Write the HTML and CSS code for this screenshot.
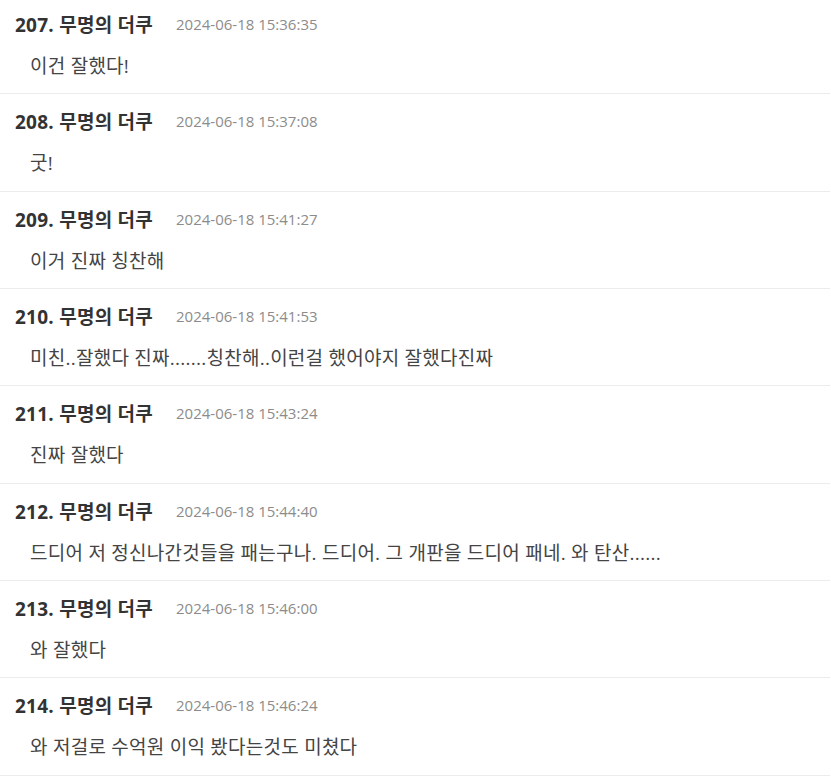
FILE: index.html
```html
<!DOCTYPE html>
<html lang="ko">
<head>
    <meta charset="UTF-8">
    <meta name="viewport" content="width=device-width, initial-scale=1.0">
    <title>댓글</title>
    <link rel="stylesheet" href="styles.css">
</head>
<body>
    <ul class="comment-list">
        <li class="comment">
            <div class="comment-head"><span class="comment-author">207. 무명의 더쿠</span><span class="comment-date">2024-06-18 15:36:35</span></div>
            <div class="comment-body">이건 잘했다!</div>
        </li>
        <li class="comment">
            <div class="comment-head"><span class="comment-author">208. 무명의 더쿠</span><span class="comment-date">2024-06-18 15:37:08</span></div>
            <div class="comment-body">굿!</div>
        </li>
        <li class="comment">
            <div class="comment-head"><span class="comment-author">209. 무명의 더쿠</span><span class="comment-date">2024-06-18 15:41:27</span></div>
            <div class="comment-body">이거 진짜 칭찬해</div>
        </li>
        <li class="comment">
            <div class="comment-head"><span class="comment-author">210. 무명의 더쿠</span><span class="comment-date">2024-06-18 15:41:53</span></div>
            <div class="comment-body">미친..잘했다 진짜.......칭찬해..이런걸 했어야지 잘했다진짜</div>
        </li>
        <li class="comment">
            <div class="comment-head"><span class="comment-author">211. 무명의 더쿠</span><span class="comment-date">2024-06-18 15:43:24</span></div>
            <div class="comment-body">진짜 잘했다</div>
        </li>
        <li class="comment">
            <div class="comment-head"><span class="comment-author">212. 무명의 더쿠</span><span class="comment-date">2024-06-18 15:44:40</span></div>
            <div class="comment-body">드디어 저 정신나간것들을 패는구나. 드디어. 그 개판을 드디어 패네. 와 탄산......</div>
        </li>
        <li class="comment">
            <div class="comment-head"><span class="comment-author">213. 무명의 더쿠</span><span class="comment-date">2024-06-18 15:46:00</span></div>
            <div class="comment-body">와 잘했다</div>
        </li>
        <li class="comment">
            <div class="comment-head"><span class="comment-author">214. 무명의 더쿠</span><span class="comment-date">2024-06-18 15:46:24</span></div>
            <div class="comment-body">와 저걸로 수억원 이익 봤다는것도 미쳤다</div>
        </li>
    </ul>
</body>
</html>
```

FILE: styles.css
```css
body {
    font-family: 'Open Sans', 'Noto Sans CJK KR', sans-serif;
    margin: 0;
    padding: 0;
    background: #fff;
}
.comment-list {
    list-style: none;
    margin: -3px 1px 0 0;
    padding: 0;
}
.comment {
    padding: 15px 0 14.33px 15px;
    border-bottom: 1px solid #ececec;
}
.comment-head {
    display: flex;
    align-items: center;
    height: 24px;
}
.comment-author {
    font-size: 19px;
    font-weight: bold;
    letter-spacing: 0.25px;
    color: #333;
}
.comment-date {
    margin-left: 23px;
    font-size: 15px;
    color: #8c8c8c;
}
.comment-body {
    margin-top: 17px;
    padding-left: 15px;
    font-size: 19px;
    line-height: 26px;
    letter-spacing: 0.25px;
    color: #444;
}
```
